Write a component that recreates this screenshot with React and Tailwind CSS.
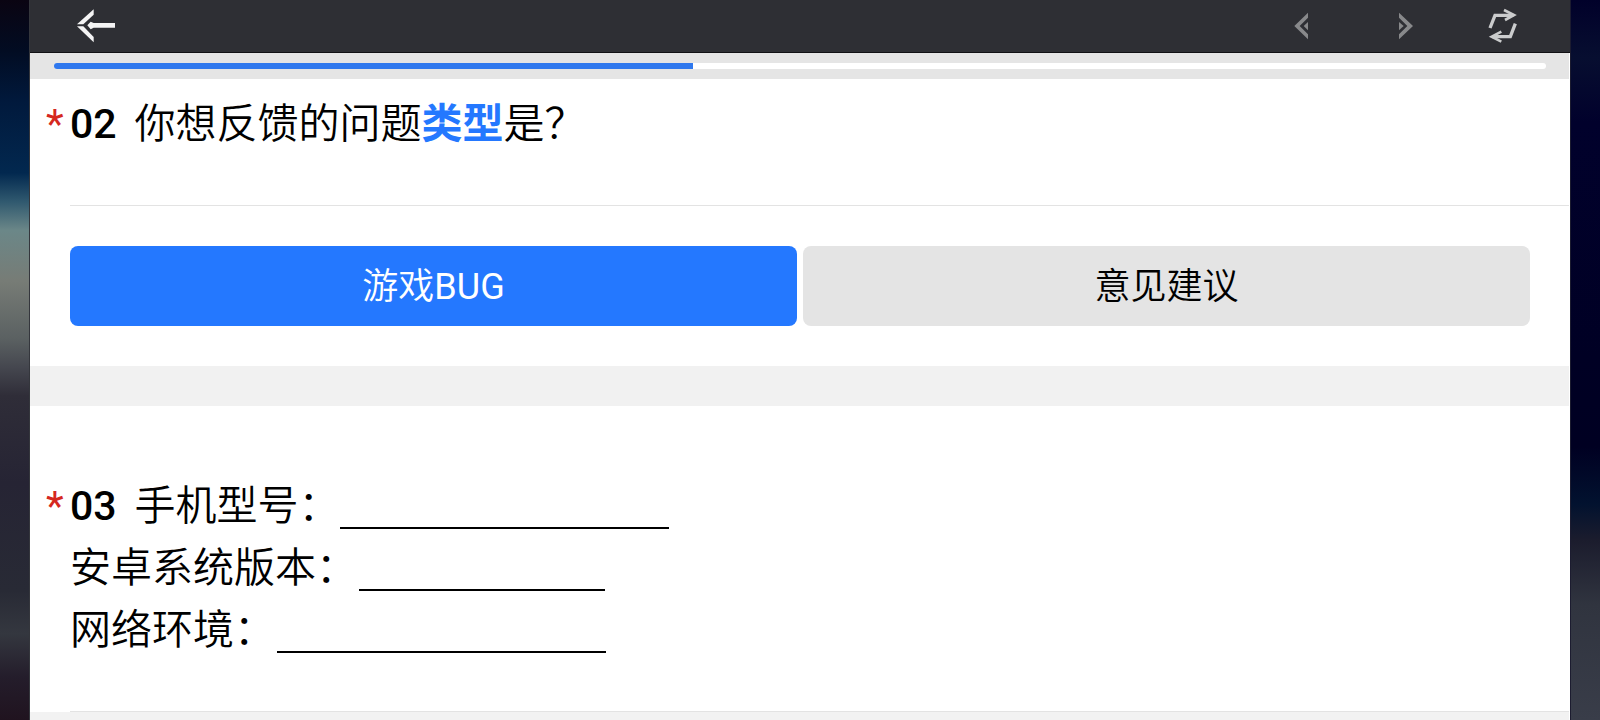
import { useState } from 'react'

const TYPES = [
  { id: 'bug', label: '游戏', latin: 'BUG' },
  { id: 'advice', label: '意见建议' },
]

function BackIcon() {
  return (
    <svg viewBox="228 24 120 108" width="40" height="36" fill="#f4f4f4" aria-hidden="true">
      <path d="M281 28 V44 L250 73 H231 Z" />
      <path d="M231 79 H250 L281 111 V127 Z" />
      <path d="M262 76 L272 65 L281 69 H345 V83 H281 L272 88 Z" />
    </svg>
  )
}

function PrevIcon() {
  return (
    <svg viewBox="42 24 120 108" width="40" height="36" fill="#88898b" aria-hidden="true">
      <path d="M144 38 V53 L119 78 L144 103 V118 L103 78 Z" />
      <path d="M144 66 V91 L131 78 Z" />
    </svg>
  )
}

function NextIcon() {
  return (
    <svg viewBox="354 24 120 108" width="40" height="36" fill="#88898b" aria-hidden="true">
      <path d="M417 38 V53 L442 78 L417 103 V118 L459 78 Z" />
      <path d="M417 66 V91 L431 78 Z" />
    </svg>
  )
}

function ReloadIcon() {
  return (
    <svg viewBox="666 24 120 108" width="40" height="36" fill="none" stroke="#cbcccd" strokeWidth="10" aria-hidden="true">
      <path d="M690 84 L705 46 H760" />
      <path d="M732 30 L762 45 L735 60" strokeWidth="8" />
      <path d="M766 71 L751 110 H697" />
      <path d="M724 95 L695 110 L724 125" strokeWidth="8" />
    </svg>
  )
}

// Red star hangs in the left margin so the number lines up with the content
function Required() {
  return <span className="w-6 shrink-0 font-normal text-[#d5281e]">*</span>
}

function Blank({ id, label, className }) {
  return (
    <>
      <label htmlFor={id}>{label}</label>
      <input
        id={id}
        type="text"
        className={`h-[54px] border-b-2 border-black bg-transparent outline-none ${className}`}
      />
    </>
  )
}

export default function App() {
  const [type, setType] = useState('bug')
  const progress = 42.8

  return (
    <div className="flex min-h-screen w-full bg-black font-[Roboto,'Noto_Sans_CJK_SC',sans-serif] font-[350] text-black">
      {/* Blurred game scene on the left */}
      <div className="w-[30px] shrink-0 border-r border-[#34363c] bg-[linear-gradient(to_bottom,#0a0412_0%,#020c22_7%,#01193c_14%,#02284f_24%,#30596f_28%,#6b8788_32%,#777c76_39%,#5b6162_47%,#45474f_51%,#2f2d38_55%,#262434_67%,#282a35_82%,#34373f_88%,#241d2b_94%,#20131f_100%)]" />

      <main className="flex min-w-0 flex-1 flex-col bg-white">
        <header className="flex h-[53px] items-center justify-between border-b border-[#111114] bg-[#2e2f34] pr-12 pl-[46px]">
          <button type="button" aria-label="返回"><BackIcon /></button>
          <div className="flex gap-16">
            <button type="button" aria-label="后退"><PrevIcon /></button>
            <button type="button" aria-label="前进"><NextIcon /></button>
            <button type="button" aria-label="刷新"><ReloadIcon /></button>
          </div>
        </header>

        <div className="flex flex-1 flex-col pr-px">
          {/* Progress */}
          <div className="flex h-[26px] items-center bg-[#e5e5e5] pr-[23px] pl-6">
            <div className="h-1.5 w-full overflow-hidden rounded-full bg-white">
              <div className="h-full bg-[#2f78ee]" style={{ width: `${progress}%` }} />
            </div>
          </div>

          {/* 02 */}
          <section className="pt-[14px] pb-10">
            <h2 className="flex pb-[50px] pl-4 text-[41px] leading-[62px]">
              <Required />
              <span className="mr-[18px] font-medium">02</span>
              <span>
                你想反馈的问题<b className="font-bold text-[#2478ff]">类型</b>是？
              </span>
            </h2>
            <div className="ml-10 border-t border-[#e3e3e3]" />
            <div className="mt-10 grid grid-cols-2 gap-1.5 pr-[39px] pl-10">
              {TYPES.map((t) => (
                <button
                  key={t.id}
                  type="button"
                  aria-pressed={type === t.id}
                  onClick={() => setType(t.id)}
                  className={`h-20 rounded-lg pt-0.5 text-[36px] ${type === t.id ? 'bg-[#2478ff] text-white' : 'bg-[#e4e4e4] text-black'}`}
                >
                  {t.label}
                  {t.latin && <span className="font-normal">{t.latin}</span>}
                </button>
              ))}
            </div>
          </section>

          <div className="h-10 bg-[#f1f1f1]" />

          {/* 03 */}
          <section className="pt-[69px]">
            <div className="pb-[50px] pl-4 text-[41px] leading-[62px]">
              <div className="flex items-start">
                <Required />
                <span className="mr-[18px] font-medium">03</span>
                <Blank id="model" label="手机型号：" className="w-[329px]" />
              </div>
              <div className="flex items-start gap-0.5 pl-6">
                <Blank id="android" label="安卓系统版本：" className="w-[246px]" />
              </div>
              <div className="flex items-start gap-0.5 pl-6">
                <Blank id="network" label="网络环境：" className="w-[329px]" />
              </div>
            </div>
            <div className="ml-10 border-t border-[#e3e3e3]" />
          </section>

          <div className="flex-1 bg-[#f2f2f2]" />
        </div>
      </main>

      {/* Blurred game scene on the right */}
      <div className="w-[30px] shrink-0 border-l border-[#1c1c30] bg-[linear-gradient(to_bottom,#01012a_0%,#070e30_8%,#01012c_17%,#000024_50%,#000022_62%,#02122f_70%,#1b1c2d_75%,#30343f_84%,#393d49_100%)]" />
    </div>
  )
}
